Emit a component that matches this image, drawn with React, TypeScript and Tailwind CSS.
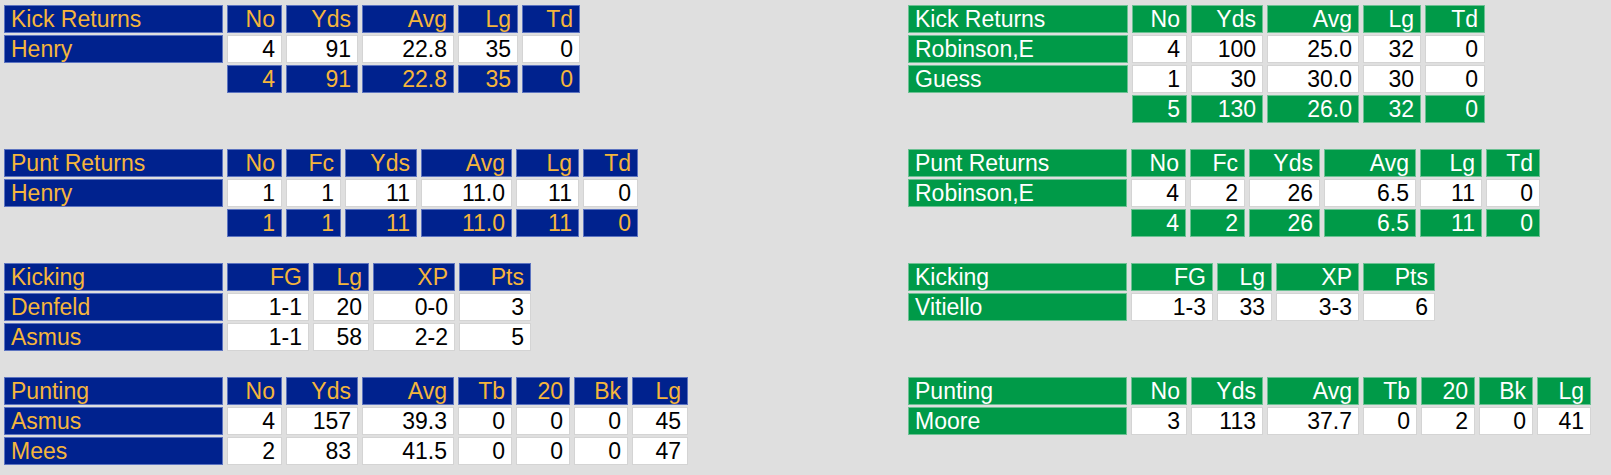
type Theme = 'blue' | 'green';

type Table = {
  title: string;
  cols: string[];
  grid: string;
  rows: string[][];
  total?: string[];
};

const headCls: Record<Theme, string> = {
  blue: 'bg-[#00228e] text-[#f5b53c] border-[#5d74c0]',
  green: 'bg-[#009a48] text-white border-[#6cc193]',
};

const dataCls = 'bg-white text-black border-[#d4d4d4]';

const home: Table[] = [
  {
    title: 'Kick Returns',
    cols: ['No', 'Yds', 'Avg', 'Lg', 'Td'],
    grid: 'grid-cols-[219px_55px_72px_92px_60px_58px]',
    rows: [['Henry', '4', '91', '22.8', '35', '0']],
    total: ['4', '91', '22.8', '35', '0'],
  },
  {
    title: 'Punt Returns',
    cols: ['No', 'Fc', 'Yds', 'Avg', 'Lg', 'Td'],
    grid: 'grid-cols-[219px_55px_55px_72px_91px_63px_55px]',
    rows: [['Henry', '1', '1', '11', '11.0', '11', '0']],
    total: ['1', '1', '11', '11.0', '11', '0'],
  },
  {
    title: 'Kicking',
    cols: ['FG', 'Lg', 'XP', 'Pts'],
    grid: 'grid-cols-[219px_82px_56px_82px_72px]',
    rows: [
      ['Denfeld', '1-1', '20', '0-0', '3'],
      ['Asmus', '1-1', '58', '2-2', '5'],
    ],
  },
  {
    title: 'Punting',
    cols: ['No', 'Yds', 'Avg', 'Tb', '20', 'Bk', 'Lg'],
    grid: 'grid-cols-[219px_55px_72px_92px_54px_54px_54px_56px]',
    rows: [
      ['Asmus', '4', '157', '39.3', '0', '0', '0', '45'],
      ['Mees', '2', '83', '41.5', '0', '0', '0', '47'],
    ],
  },
];

const away: Table[] = [
  {
    title: 'Kick Returns',
    cols: ['No', 'Yds', 'Avg', 'Lg', 'Td'],
    grid: 'grid-cols-[220px_55px_72px_92px_58px_60px]',
    rows: [
      ['Robinson,E', '4', '100', '25.0', '32', '0'],
      ['Guess', '1', '30', '30.0', '30', '0'],
    ],
    total: ['5', '130', '26.0', '32', '0'],
  },
  {
    title: 'Punt Returns',
    cols: ['No', 'Fc', 'Yds', 'Avg', 'Lg', 'Td'],
    grid: 'grid-cols-[219px_55px_55px_71px_92px_62px_54px]',
    rows: [['Robinson,E', '4', '2', '26', '6.5', '11', '0']],
    total: ['4', '2', '26', '6.5', '11', '0'],
  },
  {
    title: 'Kicking',
    cols: ['FG', 'Lg', 'XP', 'Pts'],
    grid: 'grid-cols-[219px_82px_55px_83px_72px]',
    rows: [['Vitiello', '1-3', '33', '3-3', '6']],
  },
  {
    title: 'Punting',
    cols: ['No', 'Yds', 'Avg', 'Tb', '20', 'Bk', 'Lg'],
    grid: 'grid-cols-[219px_56px_72px_92px_54px_54px_54px_54px]',
    rows: [['Moore', '3', '113', '37.7', '0', '2', '0', '41']],
  },
];

const cell = 'h-[28px] border px-[6px] text-[23px] leading-[26px] whitespace-nowrap overflow-hidden';

function StatTable({ t, theme }: { t: Table; theme: Theme }) {
  const head = headCls[theme];
  return (
    <div className={`grid ${t.grid} gap-x-[4px] gap-y-[2px]`}>
      <div className={`${cell} ${head} text-left`}>{t.title}</div>
      {t.cols.map((c, i) => (
        <div key={i} className={`${cell} ${head} text-right`}>
          {c}
        </div>
      ))}

      {t.rows.map((r, ri) =>
        r.map((v, ci) => (
          <div
            key={`${ri}-${ci}`}
            className={ci === 0 ? `${cell} ${head} text-left` : `${cell} ${dataCls} text-right`}
          >
            {v}
          </div>
        ))
      )}

      {t.total && (
        <>
          <div />
          {t.total.map((v, i) => (
            <div key={i} className={`${cell} ${head} text-right`}>
              {v}
            </div>
          ))}
        </>
      )}
    </div>
  );
}

export default function App() {
  return (
    <div className="min-h-screen bg-[#dfdfdf] pl-[4px] pt-[5px] font-['Liberation_Sans',Arial,sans-serif]">
      <div className="grid grid-cols-[904px_auto] items-start gap-y-[26px]">
        {home.map((t, i) => (
          <div key={i} className="contents">
            <StatTable t={t} theme="blue" />
            <StatTable t={away[i]} theme="green" />
          </div>
        ))}
      </div>
    </div>
  );
}
